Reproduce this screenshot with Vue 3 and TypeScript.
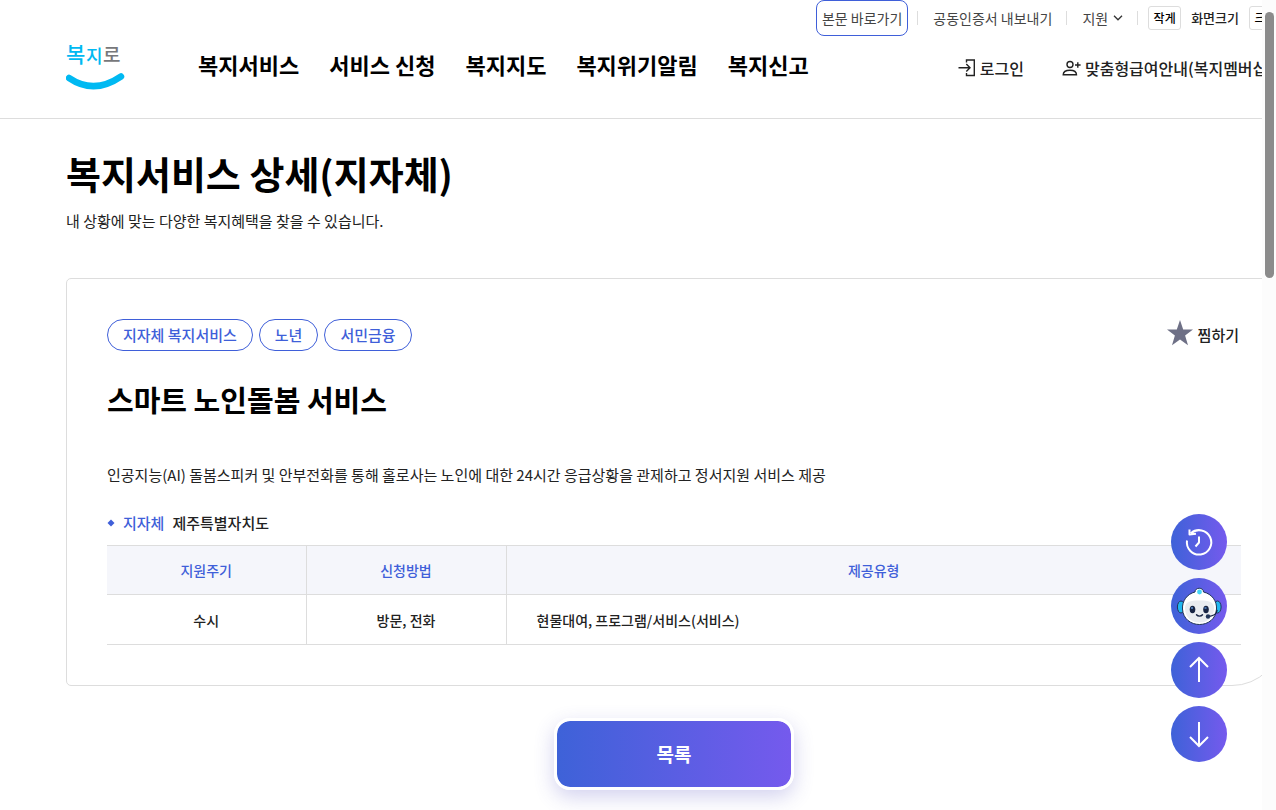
<script setup lang="ts">
import { ref } from 'vue'

interface SupportRow {
  cycle: string
  method: string
  kind: string
}

const menus: string[] = ['복지서비스', '서비스 신청', '복지지도', '복지위기알림', '복지신고']
const tags: string[] = ['지자체 복지서비스', '노년', '서민금융']
const rows: SupportRow[] = [
  { cycle: '수시', method: '방문, 전화', kind: '현물대여, 프로그램/서비스(서비스)' },
]
const favorite = ref(false)
</script>

<template>
  <div class="window">
    <div class="viewport">
      <div class="page">
        <header class="header">
          <div class="utility">
            <a href="#content" class="skip">본문 바로가기</a>
            <span class="bar"></span>
            <a href="#cert">공동인증서 내보내기</a>
            <span class="bar"></span>
            <button type="button" class="support">
              지원
              <svg width="10" height="6" viewBox="0 0 10 6" aria-hidden="true">
                <path d="M1 .8 5 4.8 9 .8" fill="none" stroke="#333" stroke-width="1.3" />
              </svg>
            </button>
            <span class="bar last"></span>
            <button type="button" class="zoom">작게</button>
            <span class="zoom-label">화면크기</span>
            <button type="button" class="zoom">크게</button>
          </div>
          <div class="gnb">
            <a href="#home" class="logo" aria-label="복지로">
              <svg width="60" height="54" viewBox="0 0 60 54" aria-hidden="true">
                <g class="logo-text" fill="#00b9f2">
                  <text x="0" y="25" font-size="21">복</text>
                  <text x="20" y="26" font-size="18">지</text>
                  <text x="37" y="25" font-size="19" fill="#77787b">로</text>
                </g>
                <path d="M3 41Q28 58 55 39.500" fill="none" stroke="#00b9f2" stroke-width="6.500" stroke-linecap="round" />
              </svg>
            </a>
            <nav class="menu">
              <a v-for="menu in menus" :key="menu" href="#menu">{{ menu }}</a>
            </nav>
            <div class="member">
              <a href="#login">
                <svg width="18" height="18" viewBox="0 0 18 18" fill="none" stroke="#222" stroke-width="1.4" aria-hidden="true">
                  <path d="M8.500 3.500V1H16.300v15.500H8.500V14M.5 8.800h11.500M8.300 5 12 8.800l-3.700 3.700" />
                </svg>
                로그인
              </a>
              <a href="#membership">
                <svg width="19" height="18" viewBox="0 0 19 18" fill="none" stroke="#222" stroke-width="1.4" aria-hidden="true">
                  <circle cx="8" cy="5.500" r="3" />
                  <path d="M1.200 15.800c0-3 2.300-4.600 6.800-4.600s6.500 1.600 6.500 4.600zM15.800 3.200v5.600M13 6h5.600" />
                </svg>
                맞춤형급여안내(복지멤버십)
              </a>
            </div>
          </div>
        </header>

        <main id="content" class="content">
          <h1>복지서비스 상세(지자체)</h1>
          <p class="lead">내 상황에 맞는 다양한 복지혜택을 찾을 수 있습니다.</p>

          <section class="card">
            <div class="card-top">
              <ul class="tags">
                <li v-for="tag in tags" :key="tag">{{ tag }}</li>
              </ul>
              <button type="button" class="favorite" :aria-pressed="favorite" @click="favorite = !favorite">
                <svg width="26" height="30" viewBox="0 0 26 30" aria-hidden="true">
                  <path d="M13 0l3.200 9.400 9.800.1-7.900 6 2.900 9.800-8-5.800-8 5.800 2.900-9.800L0 9.500l9.800-.1z" fill="#6e7086" />
                </svg>
                찜하기
              </button>
            </div>
            <h2>스마트 노인돌봄 서비스</h2>
            <p class="desc">인공지능(AI) 돌봄스피커 및 안부전화를 통해 홀로사는 노인에 대한 24시간 응급상황을 관제하고 정서지원 서비스 제공</p>
            <p class="region">
              <svg width="8" height="8" viewBox="0 0 8 8" aria-hidden="true"><path d="M4 .5 7.500 4 4 7.500.5 4z" fill="#3f5fd9" /></svg>
              <span class="region-key">지자체</span>
              <span>제주특별자치도</span>
            </p>
            <table>
              <colgroup>
                <col class="first" />
                <col class="second" />
                <col />
              </colgroup>
              <thead>
                <tr>
                  <th scope="col">지원주기</th>
                  <th scope="col">신청방법</th>
                  <th scope="col">제공유형</th>
                </tr>
              </thead>
              <tbody>
                <tr v-for="row in rows" :key="row.kind">
                  <td>{{ row.cycle }}</td>
                  <td>{{ row.method }}</td>
                  <td class="kind">{{ row.kind }}</td>
                </tr>
              </tbody>
            </table>
          </section>

          <button type="button" class="list">목록</button>
        </main>
      </div>
    </div>

    <div class="scrollbar" aria-hidden="true"><span class="thumb"></span></div>

    <div class="quick">
      <button type="button" aria-label="최근 본 서비스">
        <svg width="56" height="56" viewBox="0 0 56 56" fill="none" stroke="#fff" stroke-width="2" aria-hidden="true">
          <path d="M16 26.500A12.200 12.200 0 1 0 20 19.200M18.500 15.500V20.500L25 19.800M28 22.500v6L24.500 32.500" stroke-linejoin="round" />
        </svg>
      </button>
      <button type="button" aria-label="챗봇 상담">
        <svg width="56" height="56" viewBox="0 0 56 56" aria-hidden="true">
          <ellipse cx="10" cy="29" rx="3.600" ry="6" fill="#21b9f1" stroke="#203457" />
          <ellipse cx="46.500" cy="29" rx="3.600" ry="6" fill="#21b9f1" stroke="#203457" />
          <path d="M24 14c0-5 8.500-5 8.500 0C41 16 46 23 45.500 31 45 41 37 46.500 28.500 46.500S12 41 11.500 31C11 23 16 16 24 14z" fill="#fff" stroke="#203457" />
          <path d="M14 30c0-6 5-7.500 14.500-7.500S43 24 43 30c0 9-6 14.500-14.500 14.500S14 39 14 30z" fill="#e9ecf0" />
          <circle cx="28.500" cy="14" r="2.400" fill="#45d5f7" />
          <ellipse cx="21.500" cy="31.500" rx="2.800" ry="3.800" fill="#172443" />
          <ellipse cx="35" cy="31.500" rx="2.800" ry="3.800" fill="#172443" />
          <path d="M20 30h2M33.500 30h2" stroke="#5c8fd0" stroke-width="1.500" />
          <path d="M25.500 36.800c1.500 1.800 4.500 1.800 6 0M46 32.500C45.500 36 42 38 37.500 38.500" fill="none" stroke="#172443" stroke-width="1.400" stroke-linecap="round" />
          <circle cx="37" cy="38.500" r="2.200" fill="#203457" />
        </svg>
      </button>
      <button type="button" aria-label="맨 위로">
        <svg width="56" height="56" viewBox="0 0 56 56" fill="none" stroke="#fff" stroke-width="2" aria-hidden="true">
          <path d="M28 40V16M19 25l9-9 9 9" />
        </svg>
      </button>
      <button type="button" aria-label="맨 아래로">
        <svg width="56" height="56" viewBox="0 0 56 56" fill="none" stroke="#fff" stroke-width="2" aria-hidden="true">
          <path d="M28 16v24M19 31l9 9 9-9" />
        </svg>
      </button>
    </div>
  </div>
</template>

<style>
body {
  margin: 0;
  background: #fff;
}
</style>

<style scoped>
.window {
  position: relative;
  display: flex;
  height: 100vh;
  overflow: hidden;
  color: #222;
  font-family: "Noto Sans CJK KR", "Noto Sans", sans-serif;
  font-size: 15px;
  line-height: 24px;
}
.viewport {
  flex: 1;
  min-width: 0;
  overflow: hidden;
}
.page {
  min-width: 1348px;
}
h1, h2, p, ul {
  margin: 0;
  padding: 0;
}
a {
  color: inherit;
  text-decoration: none;
  white-space: nowrap;
}
button {
  margin: 0;
  padding: 0;
  border: 0;
  background: none;
  color: inherit;
  font: inherit;
  cursor: pointer;
}
svg {
  flex: none;
}
.header {
  padding: 0 66px 26px;
  border-bottom: 1px solid #ddd;
}
.utility {
  display: flex;
  align-items: center;
  justify-content: flex-end;
  height: 36px;
  color: #444;
  font-size: 14px;
}
.skip {
  box-sizing: border-box;
  height: 36px;
  margin-right: -5px;
  padding: 0 5px;
  border: 1px solid #3f5fd9;
  border-radius: 8px;
  line-height: 34px;
}
.bar {
  width: 1px;
  height: 14px;
  margin: 0 15px 0 14px;
  background: #ddd;
}
.bar.last {
  margin-right: 10px;
}
.support {
  display: flex;
  align-items: center;
  gap: 5px;
}
.zoom {
  box-sizing: border-box;
  width: 33px;
  height: 24px;
  border: 1px solid #ddd;
  border-radius: 3px;
  color: #000;
  font-size: 12px;
  font-weight: 500;
  line-height: 22px;
}
.zoom-label {
  margin: 0 10px;
  color: #222;
  font-size: 13px;
  font-weight: 500;
}
.gnb {
  display: flex;
  align-items: center;
  height: 56px;
}
.logo {
  display: flex;
  margin-right: 72px;
}
.logo-text {
  font-weight: 500;
}
.menu {
  display: flex;
  gap: 30px;
  color: #000;
  font-size: 22px;
  font-weight: 700;
  line-height: 32px;
}
.member {
  display: flex;
  gap: 38px;
  margin-left: auto;
  padding: 8px 9px 0 0;
  font-size: 16px;
  font-weight: 500;
}
.member a {
  display: flex;
  align-items: center;
  gap: 4px;
}
.content {
  display: flex;
  flex-direction: column;
  padding: 26px 66px 40px;
}
h1 {
  color: #000;
  font-size: 38px;
  font-weight: 700;
  line-height: 56px;
}
.lead {
  margin-top: 8px;
}
.card {
  margin-top: 45px;
  padding: 40px;
  border: 1px solid #ddd;
  border-radius: 5px 5px 50px 5px;
}
.card-top {
  display: flex;
  align-items: center;
  justify-content: space-between;
}
.tags {
  display: flex;
  gap: 6px;
  list-style: none;
}
.tags li {
  padding: 0 15px;
  border: 1px solid #3f5fd9;
  border-radius: 16px;
  color: #3f5fd9;
  font-weight: 500;
  line-height: 30px;
}
.favorite {
  display: flex;
  align-items: center;
  gap: 5px;
  padding-right: 2px;
  font-weight: 500;
}
h2 {
  margin-top: 28px;
  color: #000;
  font-size: 29px;
  font-weight: 700;
  line-height: 40px;
}
.desc {
  margin-top: 44px;
}
.region {
  display: flex;
  align-items: center;
  gap: 8px;
  margin-top: 25px;
  font-weight: 500;
  line-height: 22px;
}
.region-key {
  color: #3f5fd9;
}
table {
  width: 100%;
  margin-top: 11px;
  border-collapse: collapse;
  table-layout: fixed;
  font-size: 14px;
}
.first {
  width: 199px;
}
.second {
  width: 200px;
}
th, td {
  height: 48px;
  padding: 0;
  border-top: 1px solid #ddd;
  border-bottom: 1px solid #ddd;
  font-weight: 500;
  text-align: center;
}
td {
  height: 49px;
}
th + th, td + td {
  border-left: 1px solid #ddd;
}
th {
  background: #f5f6fb;
  color: #3f5fd9;
}
.kind {
  padding-left: 30px;
  text-align: left;
}
.list {
  box-sizing: border-box;
  align-self: center;
  width: 240px;
  height: 72px;
  margin-top: 32px;
  border: 3px solid #fff;
  border-radius: 16px;
  background: linear-gradient(90deg, #3e62d8, #755aed) padding-box;
  box-shadow: 0 7px 20px rgba(70, 65, 190, 0.24);
  color: #fff;
  font-size: 19px;
  font-weight: 700;
}
.scrollbar {
  display: flex;
  flex: none;
  align-items: flex-start;
  justify-content: center;
  width: 14px;
  padding-top: 12px;
  background: #fcfcfc;
}
.thumb {
  width: 9px;
  height: 266px;
  border-radius: 5px;
  background: #8b8b8b;
}
.quick {
  position: absolute;
  right: 49px;
  bottom: 48px;
  display: flex;
  flex-direction: column;
  gap: 8px;
}
.quick button {
  display: flex;
  width: 56px;
  height: 56px;
  border-radius: 50%;
  background: linear-gradient(90deg, #3e62d8, #755aed);
}
</style>
